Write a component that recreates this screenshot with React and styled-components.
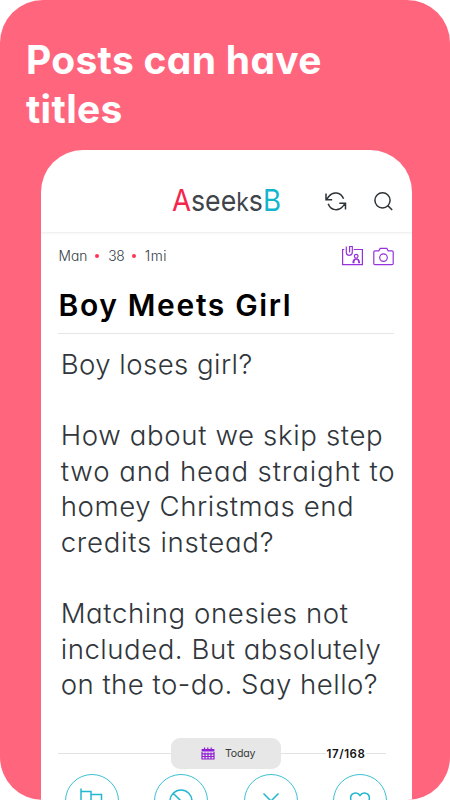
import React from 'react';
import styled, { createGlobalStyle } from 'styled-components';

const GlobalStyle = createGlobalStyle`
  *, *::before, *::after { box-sizing: border-box; }
  body {
    margin: 0;
    background: #fff;
    font-family: Inter, "Liberation Sans", sans-serif;
    font-feature-settings: "cv11" 1;
  }
`;

const Panel = styled.main`
  display: flex;
  flex-direction: column;
  width: 449.5px;
  height: 800px;
  overflow: hidden;
  border-radius: 43px;
  background: #ff667e;
`;

const Headline = styled.h1`
  flex: none;
  display: flex;
  flex-direction: column;
  height: 150px;
  margin: 0;
  padding: 36px 0 0 26px;
  color: #fff;
  font-size: 39px;
  font-weight: 750;
  line-height: 48.7px;
`;

const Line = styled.span`
  display: block;
  white-space: pre;
  letter-spacing: ${(p) => p.$track || 0}px;
`;

const Phone = styled.section`
  flex: none;
  display: flex;
  flex-direction: column;
  width: 371.5px;
  height: 650px;
  margin-left: 40.7px;
  overflow: hidden;
  border-radius: 42px 42px 0 0;
  background: #fff;
`;

const TopBar = styled.header`
  flex: none;
  display: grid;
  grid-template-columns: 131px 152.3px 47px;
  align-items: start;
  height: 83px;
  padding-top: 38px;
  border-bottom: 1px solid #f1f1f1;
  box-shadow: 0 1px 2px rgba(0, 0, 0, 0.04);
`;

const Drawing = styled.svg`
  display: block;
  flex: none;
  overflow: visible;
  fill: none;
  stroke: ${(p) => p.$color};
  stroke-width: ${(p) => p.$stroke || 1.4};
`;

const Logo = styled.svg`
  grid-column: 2;
  display: block;
  overflow: visible;
  font-family: Inter, sans-serif;
`;

const LogoLetters = styled.tspan`
  fill: ${(p) => p.$color};
  font-size: ${(p) => p.$size}px;
`;

const Tools = styled.div`
  grid-column: 3;
  display: flex;
  gap: 24px;
`;

const Meta = styled.div`
  flex: none;
  display: flex;
  align-items: center;
  height: 46px;
  padding: 0 18.5px 0 17.8px;
  color: #333a3f;
  font-size: 13.8px;
`;

const Fact = styled.span`
  width: ${(p) => p.$width}px;
  letter-spacing: ${(p) => p.$track || 0}px;
  font-weight: 350;
`;

const Dot = styled.i`
  width: 4px;
  height: 4px;
  margin-right: 9px;
  border-radius: 50%;
  background: #ff3355;
`;

const Badges = styled.div`
  display: flex;
  gap: 10px;
  margin-left: auto;
`;

const Title = styled.h2`
  flex: none;
  height: 55px;
  margin: 0 18px 0 17.3px;
  padding-top: 8px;
  border-bottom: 1px solid #e6e6e6;
  color: #000;
  font-size: 30px;
  font-weight: 640;
  line-height: 36px;
  letter-spacing: 1.65px;
  text-indent: 0.5px;
  white-space: pre;
`;

const Message = styled.div`
  flex: 1;
  display: flex;
  flex-direction: column;
  gap: 35.6px;
  padding: 12.8px 0 0 20px;
  color: #30363b;
  font-size: 27.6px;
  font-weight: 300;
  line-height: 35.6px;
`;

const Paragraph = styled.p`
  margin: 0;
`;

const DateRow = styled.div`
  flex: none;
  display: flex;
  align-items: center;
  height: 31px;
  margin: 0 26px 4.5px 17.3px;
`;

const Rule = styled.hr`
  flex: ${(p) => (p.$width ? 'none' : 1)};
  width: ${(p) => (p.$width ? `${p.$width}px` : 'auto')};
  height: 1px;
  margin: 0;
  border: 0;
  background: #e2e2e2;
`;

const DatePill = styled.div`
  display: flex;
  align-items: center;
  gap: 10px;
  width: 110px;
  height: 31px;
  padding-left: 30px;
  border-radius: 9px;
  background: #e7e7e7;
  color: #3b3b3b;
  font-size: 10.6px;
  letter-spacing: -0.2px;
`;

const Counter = styled.span`
  color: #111;
  font-size: 11.5px;
  font-weight: 600;
  letter-spacing: 0.6px;
`;

const Actions = styled.nav`
  flex: none;
  display: flex;
  gap: 35.4px;
  height: 26.5px;
  padding-left: 24.3px;
`;

const RoundButton = styled.button`
  flex: none;
  display: flex;
  align-items: center;
  justify-content: center;
  width: 54px;
  height: 54px;
  padding: 0;
  border: 1px solid #3cbfd2;
  border-radius: 50%;
  background: #fff;
`;

const paragraphs = [
  [['Boy loses girl?', 0.44]],
  [
    ['How about we skip step', 0.64],
    ['two and head straight to', 0.89],
    ['homey Christmas end', 0.6],
    ['credits instead?', 0.73],
  ],
  [
    ['Matching onesies not', 0.58],
    ['included. But absolutely', 0.52],
    ['on the to-do. Say hello?', 0.46],
  ],
];

const actions = [
  { name: 'Report', path: 'M4 2.500v24.500M4 5.500h10v13H4M14 8.500h10.500v13H14v-3.500' },
  { name: 'Block', path: 'M4 15a11 11 0 1 0 22 0a11 11 0 1 0-22 0M7.200 7.200l15.600 15.600' },
  { name: 'Dismiss', path: 'M7.500 7.500l15 15M22.500 7.500l-15 15' },
  {
    name: 'Like',
    path: 'M15 9.500C12.500 5.800 5.600 6 5.600 12.300C5.600 17.500 11 21 15 24.500C19 21 24.400 17.500 24.400 12.300C24.400 6 17.500 5.800 15 9.500z',
  },
];

const AppLogo = () => (
  <Logo width="110" height="26" viewBox="0 0 110 26" aria-label="AseeksB">
    <text x="0" y="23" textLength="109" lengthAdjust="spacingAndGlyphs">
      <LogoLetters $size={30} $color="#f5264d">A</LogoLetters>
      <LogoLetters $size={29} $color="#3f444a">see</LogoLetters>
      <LogoLetters $size={25} $color="#3f444a">k</LogoLetters>
      <LogoLetters $size={29} $color="#3f444a">s</LogoLetters>
      <LogoLetters $size={30} $color="#12b5cd">B</LogoLetters>
    </text>
  </Logo>
);

const RefreshIcon = () => (
  <Drawing width="24" height="24" viewBox="0 0 24 24" $color="#2f3438" $stroke={1.5}>
    <path d="M2 5.500v6.200h6.200M2.500 11.500L5 8.300C8.500 3.600 16.500 3.600 19.600 10.800M15.300 15.200h6.200v6.200M21.200 15.400L18.600 18.600C14.800 23.200 6.800 23 4.200 15.800" />
  </Drawing>
);

const SearchIcon = () => (
  <Drawing width="24" height="24" viewBox="0 0 24 24" $color="#2f3438" $stroke={1.5}>
    <circle cx="10.500" cy="12.300" r="7.600" />
    <path d="M15.800 17.600l4.400 4.400" />
  </Drawing>
);

const PhotoIcon = () => (
  <Drawing width="21" height="20" viewBox="0 0 21 20" $color="#9632dc" $stroke={1.2}>
    <path d="M2.300 3.500H.6v15.200h19.800V3.500h-8.700" />
    <path d="M4.300.5v5.800a3 3 0 0 0 6 0V.5H7.600v5.900" />
    <circle cx="14.200" cy="10.200" r="1.800" />
    <path d="M10.500 16.700h1.400v-1.200c.2-3 4.600-3 4.800 0v1.200h1.400M11 16.500c-.2-5 6.600-5 6.400 0" />
  </Drawing>
);

const CameraIcon = () => (
  <Drawing width="21" height="20" viewBox="0 0 21 20" $color="#9632dc" $stroke={1.2}>
    <path d="M2 4.900h3.800l1.400-2.500h6.600l1.400 2.500H19q1.200 0 1.200 1.200v11.400q0 1.200-1.200 1.200H2q-1.200 0-1.200-1.200V6.100Q.8 4.900 2 4.900z" />
    <circle cx="10.500" cy="11.600" r="3.800" />
  </Drawing>
);

const CalendarIcon = () => (
  <Drawing width="14" height="14" viewBox="0 0 14 14" $color="#8f1fd6" $stroke={1.2}>
    <path d="M3.500.5v2M6.800.5v2M10.200.5v2" />
    <path d="M.6 3.200h12.800" strokeWidth="2.400" />
    <path d="M1 5v7h12V5M1 6.800h12M1 9.500h12M4 5.500v6M7 5.500v6M10 5.500v6" />
  </Drawing>
);

export default function App() {
  return (
    <>
      <GlobalStyle />
      <Panel>
        <Headline>
          <Line $track={0.3}>Posts can have</Line>
          <Line $track={0.3}>titles</Line>
        </Headline>
        <Phone>
          <TopBar>
            <AppLogo />
            <Tools>
              <RefreshIcon />
              <SearchIcon />
            </Tools>
          </TopBar>
          <Meta>
            <Fact $width={36.8}>Man</Fact>
            <Dot />
            <Fact $width={23.4} $track={-0.3}>38</Fact>
            <Dot />
            <Fact $width={30} $track={0.6}>1mi</Fact>
            <Badges>
              <PhotoIcon />
              <CameraIcon />
            </Badges>
          </Meta>
          <Title>Boy Meets Girl</Title>
          <Message>
            {paragraphs.map((lines) => (
              <Paragraph key={lines[0][0]}>
                {lines.map(([text, track]) => (
                  <Line key={text} $track={track}>{text}</Line>
                ))}
              </Paragraph>
            ))}
          </Message>
          <DateRow>
            <Rule $width={113} />
            <DatePill>
              <CalendarIcon />
              Today
            </DatePill>
            <Rule $width={45.5} />
            <Counter>17/168</Counter>
            <Rule />
          </DateRow>
          <Actions>
            {actions.map(({ name, path }) => (
              <RoundButton key={name} aria-label={name}>
                <Drawing width="30" height="30" viewBox="0 0 30 30" $color="#22b8ce" $stroke={1.5}>
                  <path d={path} />
                </Drawing>
              </RoundButton>
            ))}
          </Actions>
        </Phone>
      </Panel>
    </>
  );
}
